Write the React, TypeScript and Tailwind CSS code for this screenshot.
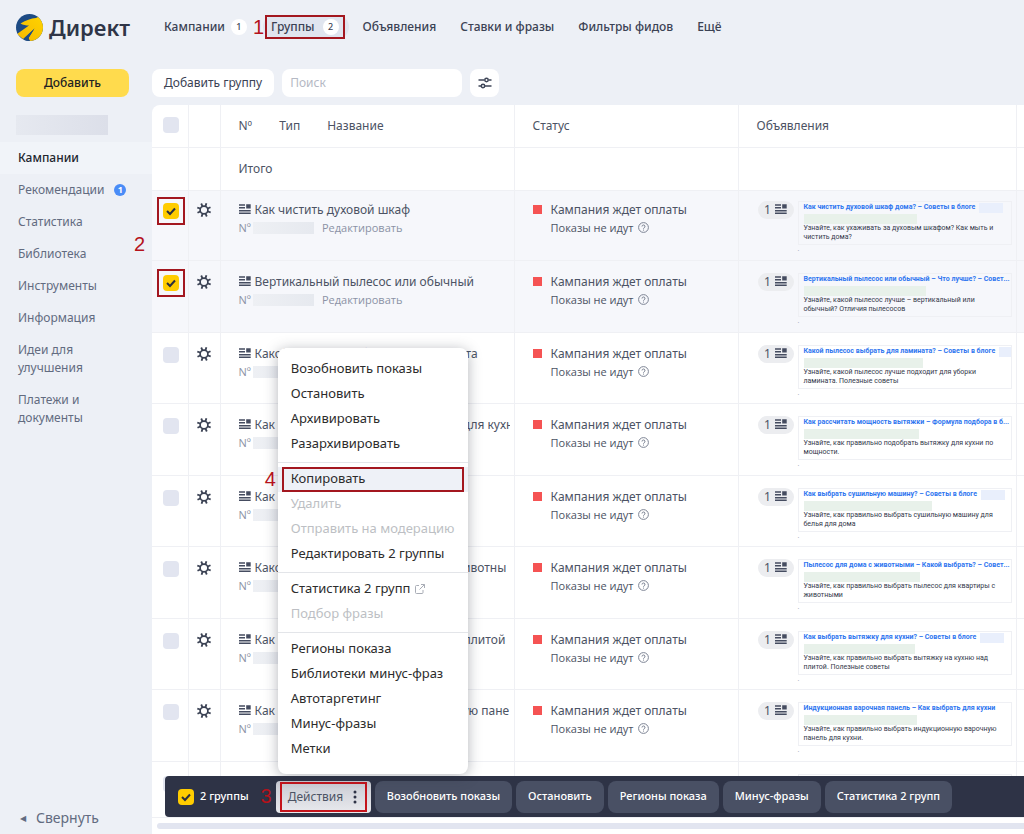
import { useState } from "react";

const tabs = [
  { titulo: "Кампании", badge: 1 },
  { titulo: "Группы", badge: 2 },
  { titulo: "Объявления" },
  { titulo: "Ставки и фразы" },
  { titulo: "Фильтры фидов" },
  { titulo: "Ещё" },
];

const sideMenu = [
  { titulo: "Кампании", active: true },
  { titulo: "Рекомендации", badge: 1 },
  { titulo: "Статистика" },
  { titulo: "Библиотека" },
  { titulo: "Инструменты" },
  { titulo: "Информация" },
  { titulo: "Идеи для улучшения" },
  { titulo: "Платежи и документы" },
];

const groups = [
  {
    name: "Как чистить духовой шкаф",
    ad: "Как чистить духовой шкаф дома? – Советы в блоге",
    text: "Узнайте, как ухаживать за духовым шкафом? Как мыть и чистить дома?",
    domain: true,
    link: 113,
  },
  {
    name: "Вертикальный пылесос или обычный",
    ad: "Вертикальный пылесос или обычный – Что лучше? – Совет...",
    text: "Узнайте, какой пылесос лучше – вертикальный или обычный? Отличия пылесосов",
    link: 122,
  },
  {
    name: "Какой пылесос выбрать для ламината",
    ad: "Какой пылесос выбрать для ламината? – Советы в блоге",
    text: "Узнайте, какой пылесос лучше подходит для уборки ламината. Полезные советы",
    domain: true,
    link: 119,
  },
  {
    name: "Как рассчитать мощность вытяжки для кухн",
    ad: "Как рассчитать мощность вытяжки – Формула подбора в б...",
    text: "Узнайте, как правильно подобрать вытяжку для кухни по мощности.",
    link: 115,
  },
  {
    name: "Как выбрать сушильную машину",
    ad: "Как выбрать сушильную машину? – Советы в блоге",
    text: "Узнайте, как правильно выбрать сушильную машину для белья для дома",
    domain: true,
    link: 128,
  },
  {
    name: "Какой пылесос купить для дома с животны",
    ad: "Пылесос для дома с животными – Какой выбрать? – Совет...",
    text: "Узнайте, как правильно выбрать пылесос для квартиры с животными",
    link: 116,
  },
  {
    name: "Как выбрать вытяжку на кухню над плитой",
    ad: "Как выбрать вытяжку для кухни? – Советы в блоге",
    text: "Узнайте, как правильно выбрать вытяжку на кухню над плитой. Полезные советы",
    domain: true,
    link: 111,
  },
  {
    name: "Как выбрать индукционную варочную пане",
    ad: "Индукционная варочная панель – Как выбрать для кухни",
    text: "Узнайте, как правильно выбрать индукционную варочную панель для кухни.",
    link: 113,
  },
];

const menuSections = [
  [{ titulo: "Возобновить показы" }, { titulo: "Остановить" }, { titulo: "Архивировать" }, { titulo: "Разархивировать" }],
  [
    { titulo: "Копировать", marked: true },
    { titulo: "Удалить", disabled: true },
    { titulo: "Отправить на модерацию", disabled: true },
    { titulo: "Редактировать 2 группы" },
  ],
  [{ titulo: "Статистика 2 групп", external: true }, { titulo: "Подбор фразы", disabled: true }],
  [{ titulo: "Регионы показа" }, { titulo: "Библиотеки минус-фраз" }, { titulo: "Автотаргетинг" }, { titulo: "Минус-фразы" }, { titulo: "Метки" }],
];

const barButtons = ["Возобновить показы", "Остановить", "Регионы показа", "Минус-фразы", "Статистика 2 групп"];

const Logo = () => (
  <svg width="27" height="27" viewBox="0 0 27 27" className="shrink-0" aria-hidden="true">
    <defs>
      <linearGradient id="sun" x1="0" y1="1" x2="1" y2="0">
        <stop offset="0" stopColor="#f5b800" />
        <stop offset="1" stopColor="#ffd400" />
      </linearGradient>
      <clipPath id="disc">
        <circle cx="13.5" cy="13.5" r="13.5" />
      </clipPath>
    </defs>
    <g clipPath="url(#disc)">
      <rect width="27" height="27" fill="#1d4b84" />
      <path d="M4.500 9.500C10 6 15 4.500 20 4L24 2 28 8V27H14L12.500 24 18.500 14.500 7 25 1 20 13 11.500C10 11.500 7 11 4.500 9.500Z" fill="url(#sun)" />
      <path d="M8 25 18.500 14.500 12.500 24 14 28H8Z" fill="#1d4b84" />
    </g>
  </svg>
);

const Gear = () => (
  <svg width="14" height="14" viewBox="0 0 14 14" fill="none" stroke="#3a4153" aria-hidden="true">
    <circle cx="7" cy="7" r="3.900" strokeWidth="1.7" />
    <path
      d="M8.500 3.300 9.400 0.300M10.700 5.500 13.500 4.200M10.700 8.500 13.700 9.400M8.500 10.700 9.800 13.500M5.500 10.700 4.600 13.700M3.300 8.500 0.500 9.800M3.300 5.500 0.300 4.600M5.500 3.300 4.200 0.500"
      strokeWidth="1.800"
    />
  </svg>
);

const AdIcon = () => (
  <svg width="12" height="11" viewBox="0 0 12 11" fill="#454c60" className="shrink-0" aria-hidden="true">
    <path d="M0 0.300h6v1.500H0zM0 3h6v1.500H0zM7.200 0.300h4.500v4.200H7.200zM0 5.900h11.700v1.500H0zM0 8.600h11.700v1.500H0z" />
  </svg>
);

const Check = ({ label, checked, onChange }: { label: string; checked: boolean; onChange: () => void }) => (
  <label className="relative block size-4">
    <input
      type="checkbox"
      aria-label={label}
      checked={checked}
      onChange={onChange}
      className="block size-4 appearance-none rounded bg-[#e2e5f0] checked:bg-[#ffcc00]"
    />
    {checked && (
      <svg viewBox="0 0 16 16" className="pointer-events-none absolute inset-0 size-4" fill="none" stroke="#2b2f3d" strokeWidth="2">
        <path d="M4 8l3 3 5-5.500" />
      </svg>
    )}
  </label>
);

const Mark = ({ children }: { children: string }) => (
  <span className="pointer-events-none font-['Liberation_Sans',sans-serif] text-xl leading-5 text-[#b5121b]">{children}</span>
);

const Sidebar = () => (
  <aside className="relative flex w-38 shrink-0 flex-col text-xs leading-[18px] text-[#626b80]">
    <a href="#" className="mt-[11px] ml-4 flex h-8 items-center gap-1.5 text-[22px] font-semibold text-[#2f3547]">
      <Logo />
      Директ
    </a>
    <button className="mt-[26px] mr-[23px] ml-4 h-7 rounded-lg bg-[#ffdb4d] font-medium text-[#222]">Добавить</button>
    <div className="mt-[18px] ml-4 h-5 w-23 bg-gradient-to-r from-[#e6e9f0] to-[#dcdfe9]" />
    <nav className="mt-[7px] flex flex-col">
      {sideMenu.map((item) => (
        <a
          href="#"
          key={item.titulo}
          className={`flex items-center gap-2.5 py-[7px] pr-12 pl-[18px] ${item.active ? "bg-[#f1f4f9] font-medium text-[#22262f]" : ""}`}
        >
          {item.titulo}
          {item.badge && (
            <span className="flex size-3 shrink-0 items-center justify-center rounded-full bg-[#4a8cf7] text-[9px] font-bold text-white">{item.badge}</span>
          )}
        </a>
      ))}
    </nav>
    <div className="absolute top-[234px] left-[134px]">
      <Mark>2</Mark>
    </div>
    <button className="mt-auto mb-[7px] flex items-center gap-2.5 pl-5 text-sm leading-[18px]">
      <span className="text-[8px]">◀</span>
      Свернуть
    </button>
  </aside>
);

const TopNav = () => (
  <nav className="flex h-[54px] items-center gap-6 pl-3 text-xs font-medium text-[#3b4254]">
    {tabs.map((tab) =>
      tab.titulo === "Группы" ? (
        <a href="#" key={tab.titulo} className="relative -mr-2.5 -ml-2 flex h-6 items-center gap-2 rounded-full bg-[#e0e5ef] pr-2.5 pl-2">
          {tab.titulo}
          <span className="flex size-4 items-center justify-center rounded-full bg-white text-[9px]">{tab.badge}</span>
          <span className="absolute inset-y-0 right-1 left-0.5 border-2 border-[#a3171f]" />
          <span className="absolute -left-2.5">
            <Mark>1</Mark>
          </span>
        </a>
      ) : (
        <a href="#" key={tab.titulo} className="flex items-center gap-1.5">
          {tab.titulo}
          {tab.badge && <span className="flex size-4 items-center justify-center rounded-full bg-white text-[9px]">{tab.badge}</span>}
        </a>
      )
    )}
  </nav>
);

const Toolbar = () => (
  <div className="mt-[15px] flex h-7 items-stretch gap-2 text-xs">
    <button className="rounded-lg bg-white px-3 text-[#3b4254]">Добавить группу</button>
    <input aria-label="Поиск" placeholder="Поиск" className="w-[180px] rounded-lg bg-white px-2 outline-none placeholder:text-[#b5b9c4]" />
    <button aria-label="Фильтры" className="flex w-[29px] items-center justify-center rounded-lg bg-white">
      <svg width="14" height="12" viewBox="0 0 14 12" fill="none" stroke="#3f4658" strokeWidth="1.500" aria-hidden="true">
        <path d="M0.500 3H6.500M10.500 3H13.500M0.500 9H3M7 9H13.500" />
        <circle cx="8.500" cy="3" r="1.700" />
        <circle cx="5" cy="9" r="1.700" />
      </svg>
    </button>
  </div>
);

const ActionsMenu = () => (
  <div className="absolute bottom-full left-0.5 mb-[7px] w-[190px] rounded-lg bg-white pt-[9px] pb-3 text-[13px] text-[#2c2c2c] shadow-[0_2px_14px_rgba(40,45,60,0.35)]">
    {menuSections.map((section, i) => (
      <ul key={i} className={i > 0 ? "mt-[5px] border-t border-[#e3e5e9] pt-1" : ""}>
        {section.map((item) => (
          <li key={item.titulo} className={`relative ${item.marked ? "bg-[#eef1f7]" : ""}`}>
            <button
              disabled={item.disabled}
              className="flex h-[25px] w-full items-center gap-1 pl-[13px] text-left whitespace-nowrap disabled:text-[#bdbfc4]"
            >
              {item.titulo}
              {item.external && (
                <svg width="10" height="10" viewBox="0 0 10 10" fill="none" stroke="#a9adb6" aria-hidden="true">
                  <path d="M4 1.500H1.500a1 1 0 0 0-1 1V8.500a1 1 0 0 0 1 1H7a1 1 0 0 0 1-1V6M6 0.500H9.500V4M9.500 0.500 4.500 5.500" />
                </svg>
              )}
            </button>
            {item.marked && (
              <>
                <span className="pointer-events-none absolute inset-x-1 inset-y-0 border-2 border-[#a3171f]" />
                <span className="absolute top-0.5 -left-[13px]">
                  <Mark>4</Mark>
                </span>
              </>
            )}
          </li>
        ))}
      </ul>
    ))}
  </div>
);

const App = () => {
  const [selected, setSelected] = useState([0, 1]);
  const [open, setOpen] = useState(true);

  const toggle = (i: number) => setSelected(selected.includes(i) ? selected.filter((s) => s !== i) : [...selected, i]);

  return (
    <div className="flex h-screen overflow-hidden bg-[#edf0f6] font-['Noto_Sans',sans-serif]">
      <Sidebar />
      <main className="relative flex min-w-0 flex-1 flex-col">
        <TopNav />
        <Toolbar />
        <div className="mt-2 min-h-0 flex-1 overflow-hidden rounded-tl-lg bg-white">
          <table className="w-full table-fixed border-collapse text-left text-xs text-[#4c5364] [&_td]:border-[#eff0f4] [&_td:not(:last-child)]:border-r [&_th]:border-[#eff0f4] [&_th]:font-normal [&_th:not(:last-child)]:border-r [&_tr]:border-b [&_tr]:border-[#eff0f4]">
            <colgroup>
              <col className="w-9" />
              <col className="w-8" />
              <col className="w-[294px]" />
              <col className="w-56" />
              <col />
              <col className="w-2" />
            </colgroup>
            <thead>
              <tr className="h-[42px]">
                <th className="pt-3 pl-[11px] align-top">
                  <Check label="Выбрать все" checked={false} onChange={() => setSelected(groups.map((_, i) => i))} />
                </th>
                <th />
                <th className="pl-[18px]">
                  <span className="flex gap-[27px]">
                    <span>Nº</span>
                    <span>Тип</span>
                    <span>Название</span>
                  </span>
                </th>
                <th className="pl-[18px]">Статус</th>
                <th className="pl-[18px]">Объявления</th>
                <th />
              </tr>
              <tr className="h-[43px]">
                <th />
                <th />
                <th className="pl-[18px]">Итого</th>
                <th />
                <th />
                <th />
              </tr>
            </thead>
            <tbody className="align-top [&>tr>td]:pt-3 [&>tr:first-child>td]:pt-2.5">
              {groups.map((group, i) => (
                <tr
                  key={group.name}
                  className={`${i === 0 ? "h-[70px]" : i % 2 ? "h-[72px]" : "h-[71px]"} ${selected.includes(i) ? "bg-[#f6f7fb]" : ""}`}
                >
                  <td className="pl-[11px]">
                    <div className={`mt-0.5 w-4 ${selected.includes(i) ? "outline-2 outline-offset-4 outline-[#a3171f]" : ""}`}>
                      <Check label={group.name} checked={selected.includes(i)} onChange={() => toggle(i)} />
                    </div>
                  </td>
                  <td className="pl-2">
                    <button aria-label="Настройки группы" className="mt-0.5 block">
                      <Gear />
                    </button>
                  </td>
                  <td className="pr-1 pl-[18px]">
                    <div className="flex items-center gap-1 overflow-hidden leading-[18px] whitespace-nowrap">
                      <AdIcon />
                      {group.name}
                    </div>
                    <div className="flex items-center font-['Open_Sans',sans-serif] text-[11px] leading-[18px] text-[#8b92a5]">
                      Nº
                      <span className="mr-2 ml-0.5 h-3 w-[61px] bg-gradient-to-r from-[#eef0f4] to-[#e6e9ef]" />
                      <a href="#">Редактировать</a>
                    </div>
                  </td>
                  <td className="pl-[18px]">
                    <div className="flex items-center gap-[9px] leading-[18px]">
                      <span className="size-[9px] bg-[#f55353]" />
                      Кампания ждет оплаты
                    </div>
                    <div className="flex items-center gap-1 pl-[18px] font-['Open_Sans',sans-serif] text-[11px] leading-[18px]">
                      Показы не идут
                      <svg width="11" height="11" viewBox="0 0 11 11" fill="none" stroke="#7d8494" aria-hidden="true">
                        <circle cx="5.500" cy="5.500" r="4.900" />
                        <path d="M4 4.500a1.500 1.500 0 1 1 2.200 1.300q-.7.300-.7 1M5.500 7.600v1" />
                      </svg>
                    </div>
                  </td>
                  <td className="pr-1 pl-[19px]">
                    <div className="flex items-start gap-1">
                      <span className="flex h-[18px] w-9 shrink-0 items-center justify-center gap-1 rounded-full bg-[#ecedf0]">
                        1 <AdIcon />
                      </span>
                      <div className="min-w-0 flex-1 font-['Roboto',sans-serif] text-[7px] leading-[9px]">
                        <div className="h-11 border border-[#eff0f4] pl-[5px] text-[#33384a]">
                          <div className="flex h-3 items-center gap-1 whitespace-nowrap">
                            <a href="#" className="font-bold text-[#2f76f0]">
                              {group.ad}
                            </a>
                            {group.domain && <span className="h-2.5 w-6 max-w-6 min-w-0 bg-[#e9effc]" />}
                          </div>
                          <div className="h-2.5 bg-[#e8f1ea]" style={{ width: group.link }} />
                          <p className="w-[195px]">{group.text}</p>
                        </div>
                        <div className="text-[#8b92a5]">.</div>
                      </div>
                    </div>
                  </td>
                  <td />
                </tr>
              ))}
              <tr className="h-14">
                <td className="pl-[11px]">
                  <div className="mt-0.5">
                    <Check label="Группа" checked={selected.includes(groups.length)} onChange={() => toggle(groups.length)} />
                  </div>
                </td>
                <td />
                <td />
                <td />
                <td className="pr-1 pl-[59px]">
                  <div className="h-10 border border-[#eff0f4]" />
                </td>
                <td />
              </tr>
            </tbody>
          </table>
        </div>
        <div className="absolute right-0 bottom-[5px] left-[5px] h-1.5 rounded-l-full bg-[#e2e5f0]" />
        <div className="absolute right-0 bottom-[17px] left-[13px] flex h-[41px] items-center rounded-l bg-[#2e3346] pl-[13px] text-[11px] text-white">
          <Check label="Снять выделение" checked={selected.length > 0} onChange={() => setSelected([])} />
          <span className="ml-1.5 font-medium">2 группы</span>
          <span className="ml-3">
            <Mark>3</Mark>
          </span>
          <div className="relative ml-1">
            <button
              onClick={() => setOpen(!open)}
              className="flex h-8 w-[95px] items-center justify-between rounded bg-gradient-to-b from-[#c9cbd3] to-[#e9eaee] pr-3.5 pl-3 text-xs text-[#4c5364]"
            >
              Действия
              <svg width="4" height="14" viewBox="0 0 4 14" fill="#2e3346" aria-hidden="true">
                <circle cx="2" cy="2" r="1.500" />
                <circle cx="2" cy="7" r="1.500" />
                <circle cx="2" cy="12" r="1.500" />
              </svg>
            </button>
            <span className="pointer-events-none absolute inset-x-1 inset-y-px border-2 border-[#c4141c]" />
            {open && <ActionsMenu />}
          </div>
          <div className="ml-1 flex gap-1">
            {barButtons.map((titulo) => (
              <button key={titulo} className="h-8 rounded-lg bg-[#495064] px-3 font-medium whitespace-nowrap">
                {titulo}
              </button>
            ))}
          </div>
        </div>
      </main>
    </div>
  );
};

export default App;
